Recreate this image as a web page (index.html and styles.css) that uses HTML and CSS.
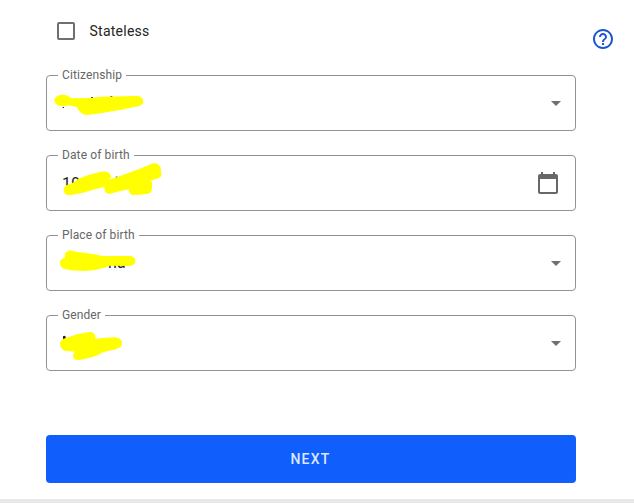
FILE: index.html
```html
<!DOCTYPE html>
<html lang="en">
<head>
<meta charset="utf-8">
<title>Personal details</title>
<link rel="stylesheet" href="styles.css">
</head>
<body>
<main class="page">
  <form class="form">
    <label class="check"><span class="box"></span><span>Stateless</span></label>
    <div class="field">
      <span class="label">Citizenship</span>
      <span class="caret"></span>
      <svg class="marker" viewBox="0 0 420 210">
        <path class="ink" d="M68 126h4v3h-4zM153 96h6v3h-6zM211 93h6v3h-6z"/>
        <path class="mark" d="M43 105C45 94 57 89 69 89C80 89 87 95 96 100L148 99L186 95L287 93C300 93 310 99 310 108C310 118 300 125 287 125L269 129L244 134L216 139L186 144L141 150C126 149 117 140 111 127L94 122C84 120 75 126 64 123C51 122 43 115 43 105Z"/>
      </svg>
    </div>
    <div class="field">
      <span class="label">Date of birth</span>
      <span class="value">19</span>
      <svg class="calendar" viewBox="0 0 20 22"><path d="M3 0h2v2h10V0h2v2h1a2 2 0 0 1 2 2v16a2 2 0 0 1-2 2H2a2 2 0 0 1-2-2V4a2 2 0 0 1 2-2h1zM2 7v13h16V7z"/></svg>
      <svg class="marker" viewBox="0 0 420 210">
        <path class="ink" d="M227 95h6v3h-6z"/>
        <path class="mark" d="M71 134C72 122 81 118 94 116L116 101L143 91L180 81C195 76 212 82 214 96L207 103L226 98L267 83L298 72L335 56C348 52 361 59 362 70L364 91C362 99 353 101 333 106C338 114 337 128 334 139C331 149 315 147 299 149L278 150C269 149 268 140 266 133L241 138L210 146C199 147 192 140 193 125L157 135L129 143L94 150C79 152 71 146 71 134Z"/>
      </svg>
    </div>
    <div class="field">
      <span class="label">Place of birth</span>
      <span class="value tail">na</span>
      <span class="caret"></span>
      <svg class="marker" viewBox="0 0 420 210">
        <path class="mark" d="M60 114C60 104 66 100 75 98C72 87 78 78 90 76L108 80L134 84L163 88L187 93L269 93C281 94 286 100 286 108C286 117 280 122 270 123L210 122L190 129L162 136L129 138L94 136L75 132C65 130 60 122 60 114Z"/>
      </svg>
    </div>
    <div class="field">
      <span class="label">Gender</span>
      <span class="caret"></span>
      <svg class="marker" viewBox="0 0 420 210">
        <path class="ink" d="M69 94l5-2 4 4-3 6-6 1z"/>
        <path class="mark" d="M60 117C60 106 68 101 79 98L111 88L149 81C161 81 167 89 166 101L196 98L224 97C238 99 246 105 246 114C246 126 239 130 221 134L189 142L170 152L146 159L119 165C108 166 99 161 99 153C99 148 101 144 105 140L79 138C66 136 60 127 60 117Z"/>
      </svg>
    </div>
    <button class="next" type="button">NEXT</button>
  </form>
  <svg class="help" viewBox="0 0 24 24"><path d="M11 18h2v-2h-2v2zm1-16C6.480 2 2 6.480 2 12s4.480 10 10 10 10-4.480 10-10S17.520 2 12 2zm0 18c-4.410 0-8-3.590-8-8s3.590-8 8-8 8 3.590 8 8-3.590 8-8 8zm0-14c-2.210 0-4 1.790-4 4h2c0-1.100.9-2 2-2s2 .9 2 2c0 2-3 1.750-3 5h2c0-2.250 3-2.500 3-5 0-2.210-1.790-4-4-4z"/></svg>
</main>
<footer class="edge"></footer>
</body>
</html>
```
FILE: styles.css
```css
* { box-sizing: border-box; }
body {
  margin: 0;
  height: 503px;
  overflow: hidden;
  display: flex;
  flex-direction: column;
  background: #fff;
  font-family: Roboto, "Liberation Sans", sans-serif;
  color: #242424;
}
.page {
  flex: 1;
  display: flex;
  align-items: flex-start;
  padding: 20px 0 0 46px;
}
.form {
  width: 530px;
  display: flex;
  flex-direction: column;
  gap: 24px;
}
.check {
  height: 22px;
  margin-bottom: 9px;
  padding-left: 11px;
  display: flex;
  align-items: center;
  gap: 14.5px;
  font-size: 14px;
  letter-spacing: 0.25px;
}
.box {
  width: 18px;
  height: 18px;
  border: 2px solid #6f6f6f;
  border-radius: 2px;
}
.field {
  position: relative;
  height: 56px;
  border: 1px solid #929292;
  border-radius: 4px;
  display: flex;
  align-items: center;
  padding: 0 14px 0 15px;
}
.label {
  position: absolute;
  left: 11px;
  top: -9px;
  padding: 0 4px;
  background: #fff;
  color: #666;
  font-size: 12px;
  line-height: 16px;
  letter-spacing: 0.11px;
}
.value { font-size: 16px; letter-spacing: 0.15px; }
.tail { padding: 0 0 2px 46px; }
.caret {
  margin-left: auto;
  border: 5px solid transparent;
  border-top-color: #707070;
  border-bottom: 0;
}
.calendar {
  width: 20px;
  height: 22px;
  margin: 0 3px 0 auto;
  fill: #686868;
}
.marker {
  position: absolute;
  left: -7px;
  top: -11px;
  width: 140px;
  height: 70px;
}
.mark { fill: #ff0; }
.ink { fill: #222; }
.next {
  height: 48px;
  margin-top: 40px;
  padding: 0 7px 0 6px;
  border: 0;
  border-radius: 4px;
  background: #105efb;
  color: #dce8ff;
  font: 500 14px Roboto, "Liberation Sans", sans-serif;
  letter-spacing: 1.25px;
}
.help {
  width: 24px;
  height: 24px;
  margin: 7px 0 0 15.4px;
  fill: #1c57cf;
}
.edge {
  height: 4px;
  background: #e8e8e8;
}
```
